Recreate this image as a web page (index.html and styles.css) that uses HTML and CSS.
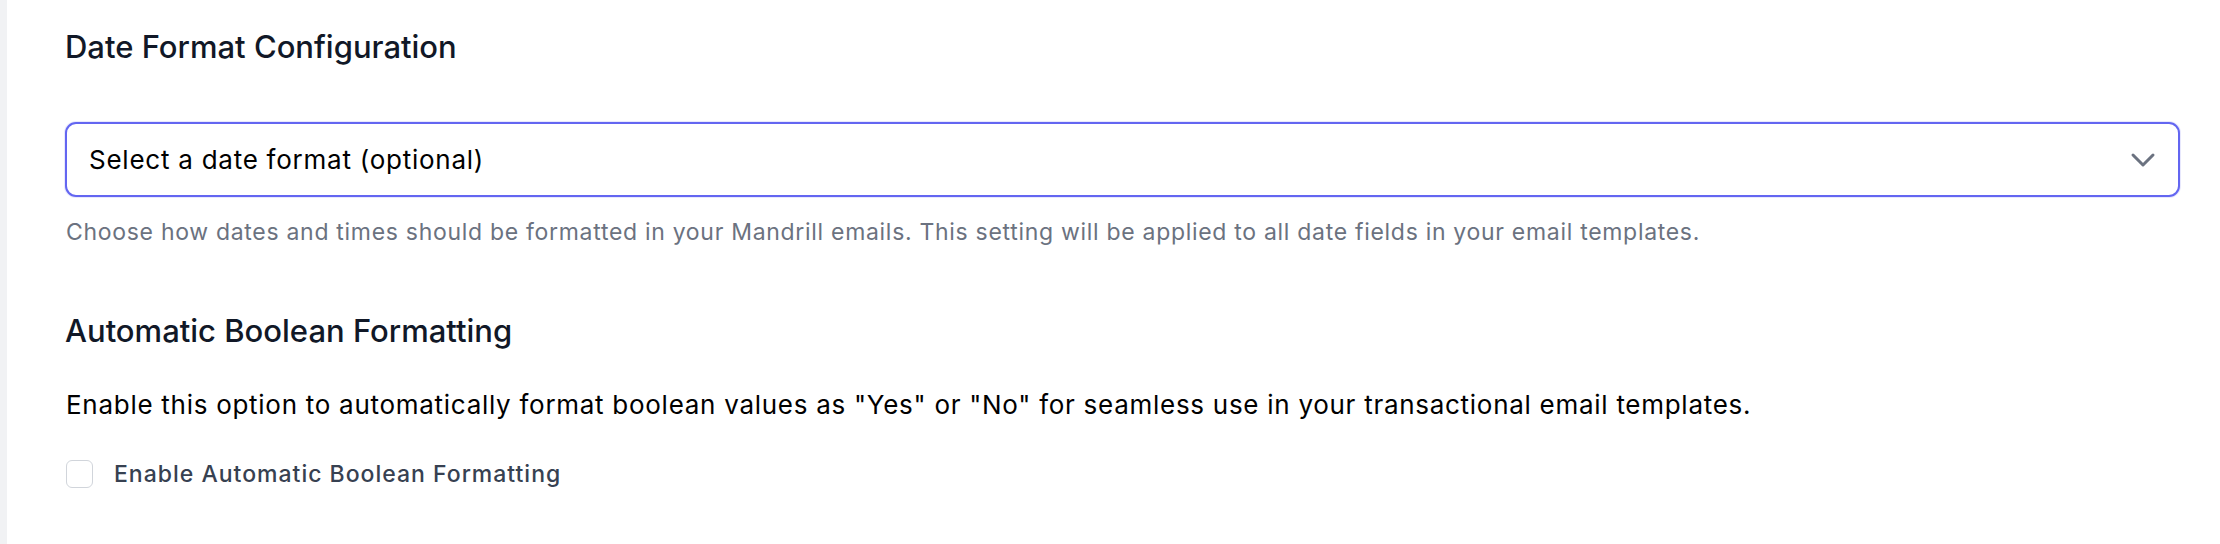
FILE: index.html
```html
<!DOCTYPE html>
<html lang="en">
<head>
    <meta charset="UTF-8">
    <meta name="viewport" content="width=device-width, initial-scale=1.0">
    <title>Mandrill Settings</title>
    <link rel="stylesheet" href="styles.css">
</head>
<body>
    <div class="layout">
        <div class="rail"></div>
        <main class="settings">
            <section class="block">
                <h2 class="block-title">Date Format Configuration</h2>
                <div class="select-wrap">
                    <select class="select">
                        <option>Select a date format (optional)</option>
                    </select>
                    <svg class="chevron" viewBox="0 0 20 20" fill="none" stroke="currentColor" stroke-width="1.5" stroke-linecap="round" stroke-linejoin="round">
                        <path d="M5 7.5l5 5 5-5"/>
                    </svg>
                </div>
                <p class="help">Choose how dates and times should be formatted in your Mandrill emails. This setting will be applied to all date fields in your email templates.</p>
            </section>
            <section class="block block-bool">
                <h2 class="block-title">Automatic Boolean Formatting</h2>
                <p class="desc">Enable this option to automatically format boolean values as "Yes" or "No" for seamless use in your transactional email templates.</p>
                <label class="check">
                    <span class="box"></span>
                    <span class="check-label">Enable Automatic Boolean Formatting</span>
                </label>
            </section>
        </main>
    </div>
</body>
</html>
```

FILE: styles.css
```css
body {
    margin: 0;
    padding: 0;
    background: #fff;
    font-family: 'Inter', 'Liberation Sans', sans-serif;
    color: #111827;
}
.layout {
    display: flex;
    min-height: 544px;
}
.rail {
    width: 7px;
    background: #f1f2f4;
    flex-shrink: 0;
}
.settings {
    flex: 1;
    padding: 27px 40px 0 58px;
}
.block-title {
    margin: 0;
    font-size: 31px;
    line-height: 40px;
    font-weight: 500;
    color: #111827;
}
.select-wrap {
    position: relative;
    margin-top: 55px;
}
.select {
    display: block;
    width: 100%;
    height: 75px;
    box-sizing: border-box;
    padding: 0 60px 0 22px;
    font-family: inherit;
    font-size: 26px;
    letter-spacing: 0.75px;
    color: #000;
    background: #fff;
    border: 2px solid #6366f1;
    border-radius: 11px;
    box-shadow: 0 0 0 1px rgba(99, 102, 241, 0.15);
    appearance: none;
    -webkit-appearance: none;
    outline: none;
}
.chevron {
    position: absolute;
    right: 17px;
    top: 18px;
    width: 40px;
    height: 40px;
    color: #6b7280;
    pointer-events: none;
}
.help {
    margin: 19px 0 0 1px;
    font-size: 23px;
    line-height: 32px;
    letter-spacing: 0.7px;
    color: #6b7280;
}
.block-bool {
    margin-top: 63px;
}
.desc {
    margin: 36px 0 0 1px;
    font-size: 26px;
    line-height: 36px;
    letter-spacing: 0.72px;
    color: #000;
}
.check {
    display: flex;
    align-items: center;
    gap: 21px;
    margin-top: 36px;
    margin-left: 1px;
}
.box {
    width: 27px;
    height: 28px;
    box-sizing: border-box;
    border: 1.5px solid #d1d5db;
    border-radius: 6px;
    background: #fff;
}
.check-label {
    font-size: 23px;
    line-height: 30px;
    font-weight: 500;
    letter-spacing: 1px;
    color: #374151;
}
```
